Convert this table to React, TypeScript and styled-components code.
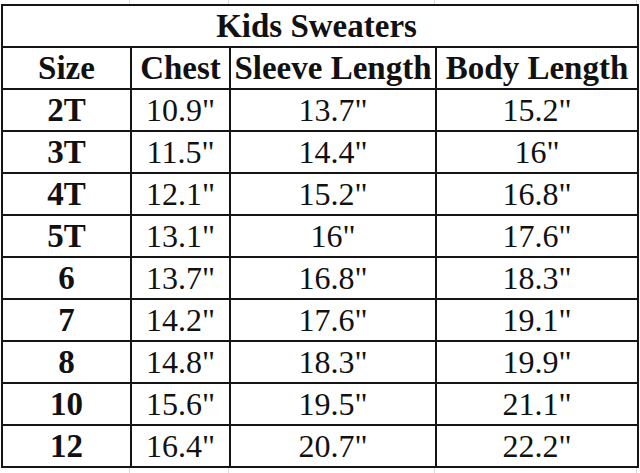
import React from "react";
import styled, { createGlobalStyle } from "styled-components";

const GlobalStyle = createGlobalStyle`
  html, body {
    margin: 0;
    padding: 0;
    background: #fff;
  }
  body {
    font-family: "Liberation Serif", "DejaVu Serif", serif;
    color: #111;
  }
`;

const Page = styled.div`
  width: 640px;
  height: 473px;
  overflow: hidden;
  padding-left: 1px;
  box-sizing: border-box;
`;

// faint spreadsheet gridlines peeking out above/below the table
const GridStrip = styled.div<{ $h: number }>`
  display: grid;
  grid-template-columns: 129px 99px 206px 202px;
  height: ${(p) => p.$h}px;
  div {
    border-right: 1px solid #dcdcdc;
  }
`;

const Table = styled.table`
  border-collapse: collapse;
  table-layout: fixed;
  width: 636px;
  font-family: "Liberation Serif", "DejaVu Serif", serif;
  font-size: 33px;
  line-height: 1;
  color: #111;
  tr {
    height: 42px;
  }
`;

const Title = styled.th`
  border: 2px solid #151515;
  font-family: "Liberation Serif", serif;
  font-weight: bold;
  text-align: center;
  padding: 0 7px 0 0;
  white-space: nowrap;
`;

const HeadCell = styled.th`
  border: 2px solid #151515;
  font-family: "Liberation Serif", serif;
  font-weight: bold;
  text-align: center;
  padding: 0;
  white-space: nowrap;
`;

const Cell = styled.td<{ $bold?: boolean }>`
  border: 2px solid #151515;
  font-family: "Liberation Serif", serif;
  text-align: center;
  padding: 0;
  white-space: nowrap;
  font-weight: ${(p) => (p.$bold ? "bold" : "normal")};
  font-size: ${(p) => (p.$bold ? "33px" : "32px")};
`;

const rows: [string, string, string, string][] = [
  ["2T", '10.9"', '13.7"', '15.2"'],
  ["3T", '11.5"', '14.4"', '16"'],
  ["4T", '12.1"', '15.2"', '16.8"'],
  ["5T", '13.1"', '16"', '17.6"'],
  ["6", '13.7"', '16.8"', '18.3"'],
  ["7", '14.2"', '17.6"', '19.1"'],
  ["8", '14.8"', '18.3"', '19.9"'],
  ["10", '15.6"', '19.5"', '21.1"'],
  ["12", '16.4"', '20.7"', '22.2"'],
];

export default function App(): JSX.Element {
  return (
    <Page>
      <GlobalStyle />
      <GridStrip $h={4}>
        <div /><div /><div /><div />
      </GridStrip>
      <Table>
        <colgroup>
          <col style={{ width: 129 }} />
          <col style={{ width: 99 }} />
          <col style={{ width: 206 }} />
          <col style={{ width: 202 }} />
        </colgroup>
        <thead>
          <tr>
            <Title colSpan={4}>Kids Sweaters</Title>
          </tr>
          <tr>
            <HeadCell>Size</HeadCell>
            <HeadCell>Chest</HeadCell>
            <HeadCell>Sleeve Length</HeadCell>
            <HeadCell>Body Length</HeadCell>
          </tr>
        </thead>
        <tbody>
          {rows.map((r, i) => (
            <tr key={i}>
              <Cell $bold>{r[0]}</Cell>
              <Cell>{r[1]}</Cell>
              <Cell>{r[2]}</Cell>
              <Cell>{r[3]}</Cell>
            </tr>
          ))}
        </tbody>
      </Table>
      <GridStrip $h={6}>
        <div /><div /><div /><div />
      </GridStrip>
    </Page>
  );
}
